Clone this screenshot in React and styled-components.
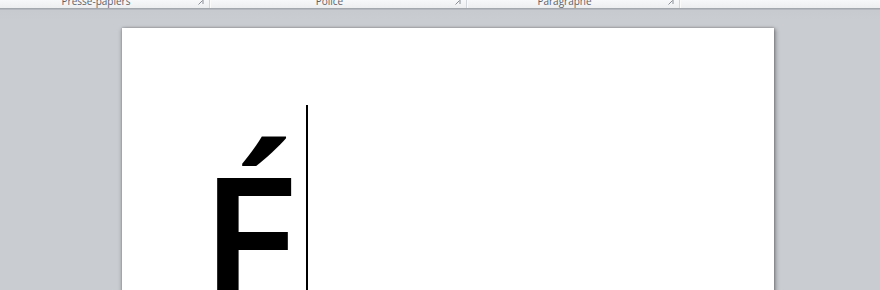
import React from "react";
import styled, { createGlobalStyle } from "styled-components";

const Global = createGlobalStyle`
  html, body { margin: 0; padding: 0; }
  body { background: #c9ccd1; overflow: hidden; font-family: "Open Sans", "Noto Sans", sans-serif; }
`;

const Shell = styled.div`
  width: 880px;
  height: 290px;
  overflow: hidden;
  display: flex;
  flex-direction: column;
  background: linear-gradient(#bcc0c6 0px, #c6c9ce 6px, #c9ccd1 20px);
`;

const Ribbon = styled.div`
  height: 8px;
  flex: none;
  display: flex;
  background: linear-gradient(#f7f8f9, #eceef0);
  border-bottom: 1px solid #a3a8ae;
  box-shadow: 0 1px 0 #b5b9bf;
  overflow: hidden;
`;

const Group = styled.div`
  position: relative;
  width: ${(p) => p.$w}px;
  flex: none;
  height: 100%;
  box-sizing: border-box;
  padding-right: 17px;
  border-right: 1px solid #d3d6da;
  box-shadow: 1px 0 0 #fbfbfc;
  display: flex;
  justify-content: center;
`;

const Label = styled.span`
  font-size: 10px;
  line-height: 10px;
  color: #5e6167;
  margin-top: -4px;
  white-space: nowrap;
`;

const Launcher = styled.svg`
  position: absolute;
  right: 4px;
  top: -2px;
`;

const Filler = styled.div`
  flex: 1;
`;

const Workspace = styled.div`
  flex: 1;
  padding-top: 19px;
  padding-left: 122px;
`;

const Page = styled.div`
  width: 652px;
  height: 400px;
  background: #ffffff;
  box-shadow: 0 0 2px rgba(0, 0, 0, 0.25), 2px 1px 4px rgba(0, 0, 0, 0.3),
    -1px 1px 4px rgba(0, 0, 0, 0.15);
  padding-top: 77px;
  padding-left: 78px;
  box-sizing: border-box;
`;

const Line = styled.div`
  display: flex;
  align-items: flex-start;
`;

const Glyph = styled.span`
  font-family: "Open Sans", "Noto Sans", sans-serif;
  font-weight: 600;
  font-size: 183px;
  line-height: 1;
  color: #000;
  margin-top: 42px;
`;

const Caret = styled.span`
  display: inline-block;
  width: 2px;
  height: 260px;
  background: #000;
  margin-left: 4px;
`;

function LaunchIcon() {
  return (
    <Launcher width="8" height="8" viewBox="0 0 8 8">
      <path d="M1 1h5v5" fill="none" stroke="#8a8f96" strokeWidth="1" />
      <path d="M1.5 6.5l4-4" stroke="#8a8f96" strokeWidth="1" />
    </Launcher>
  );
}

export default function App() {
  return (
    <>
      <Global />
      <Shell>
        <Ribbon>
          <Group $w={210}>
            <Label>Presse-papiers</Label>
            <LaunchIcon />
          </Group>
          <Group $w={257}>
            <Label>Police</Label>
            <LaunchIcon />
          </Group>
          <Group $w={213}>
            <Label>Paragraphe</Label>
            <LaunchIcon />
          </Group>
          <Filler />
        </Ribbon>
        <Workspace>
          <Page>
            <Line>
              <Glyph>É</Glyph>
              <Caret />
            </Line>
          </Page>
        </Workspace>
      </Shell>
    </>
  );
}
